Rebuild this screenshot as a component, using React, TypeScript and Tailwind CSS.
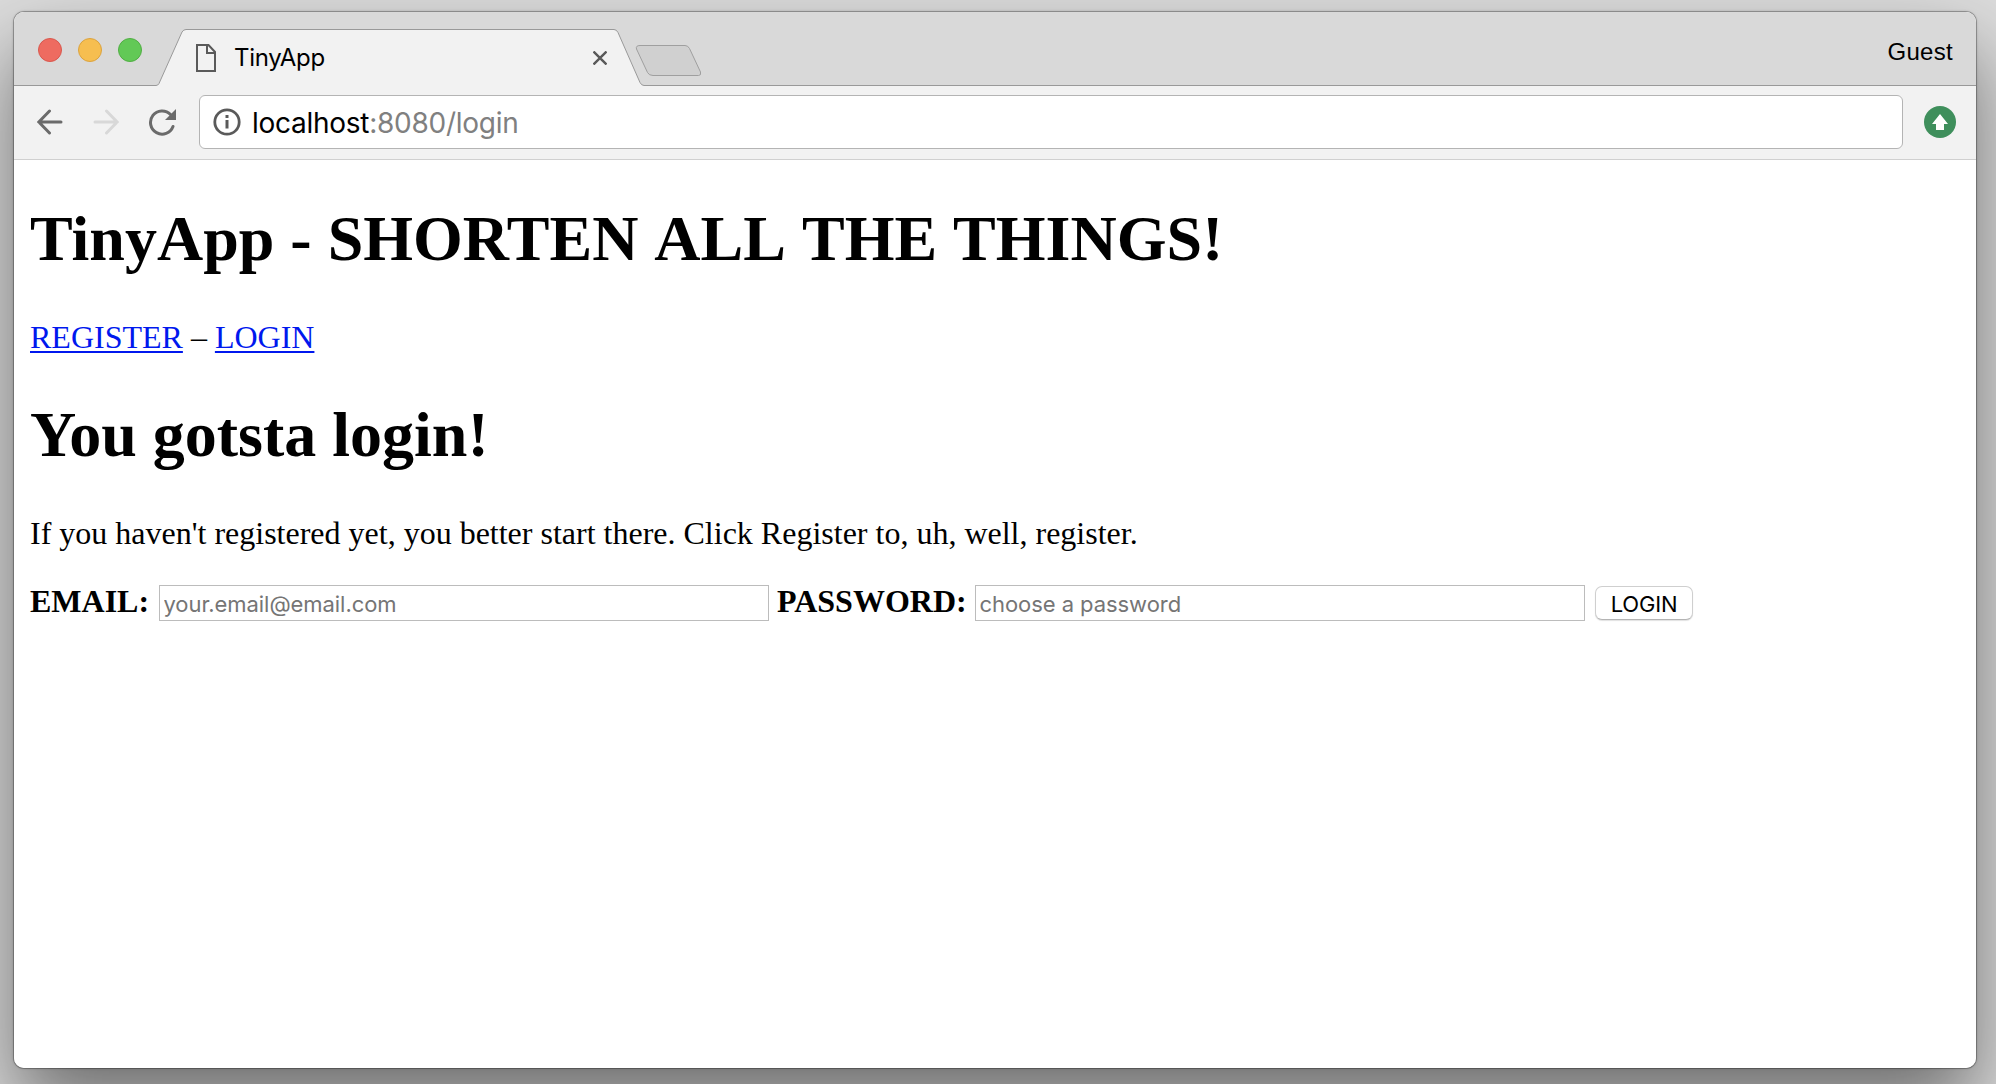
import React from "react";

function TabStrip() {
  return (
    <div className="relative flex h-[74px] shrink-0 items-start bg-[#d9d9d9]">
      <svg className="absolute left-0 top-0" width="1962" height="74" fill="none">
        <path d="M0 73.5H142Q144 73.5 145 71.5L168 20Q169.5 17.5 172 17.5H600Q602.500 17.500 604 20.500L626 70.500Q627.500 73.500 630 73.500H1962V75H0Z" fill="#f2f2f2" stroke="#999" />
        <path d="M626 33.500H671Q674 33.500 675.500 36.500L686.500 60Q687.500 63.500 684.500 63.500H639Q635 63.500 633.500 60.500L622.500 37Q621.500 33.500 626 33.500Z" fill="#d0d0d0" stroke="#9f9f9f" />
      </svg>
      <div className="relative ml-6 mt-[26px] flex gap-4">
        <span className="size-6 rounded-full border border-[#d9584e] bg-[#ee6b60]" />
        <span className="size-6 rounded-full border border-[#dba33f] bg-[#f6be50]" />
        <span className="size-6 rounded-full border border-[#51ae44] bg-[#62c956]" />
      </div>
      <svg className="relative ml-[54px] mt-8" width="20" height="28" fill="none" stroke="#5a5a5a" strokeWidth="2">
        <path d="M1 1H12.500L19 8V27H1Z" />
        <path d="M11 1V9H19" />
      </svg>
      <span className="relative ml-[18px] mt-[31px] w-[360px] text-[24px] leading-[30px] tracking-[-0.3px]">TinyApp</span>
      <svg className="relative -ml-px mt-[39px]" width="14" height="14" stroke="#5a5a5a" strokeWidth="2.400">
        <path d="M0.500 0.500L13.500 13.500M13.500 0.500L0.500 13.500" />
      </svg>
      <span className="relative ml-auto mr-[23px] mt-[25px] font-['Liberation_Sans',sans-serif] text-[24px] leading-[30px] tracking-[0.3px]">Guest</span>
    </div>
  );
}

function Toolbar() {
  return (
    <div className="flex h-[74px] shrink-0 items-center border-b border-[#d0d0d0] bg-[#f2f2f2] pb-px">
      <svg className="ml-[23px]" width="26" height="26" fill="none" stroke="#6b6b6b" strokeWidth="3" strokeLinecap="round">
        <path d="M2 13H24M12.500 2L1.800 13L12.500 24" />
      </svg>
      <svg className="ml-[30px]" width="26" height="26" fill="none" stroke="#d8d8d8" strokeWidth="3" strokeLinecap="round">
        <path d="M2 13H24M13.500 2L24.200 13L13.500 24" />
      </svg>
      <svg className="ml-[29px]" width="28" height="28" fill="none">
        <path d="M25 18.500A11.600 11.600 0 1 1 22.500 6.500" stroke="#6b6b6b" strokeWidth="3" strokeLinecap="round" />
        <path d="M28 1V12H17Z" fill="#6b6b6b" />
      </svg>
      <div className="ml-[23px] flex h-[54px] w-[1704px] items-center rounded-[6px] border border-[#b4b4b4] bg-white pl-[13px]">
        <svg width="28" height="28" fill="none">
          <circle cx="14" cy="14" r="12.200" stroke="#5a5a5a" strokeWidth="2.800" />
          <path d="M12.500 7H15.500V10H12.500ZM12.500 12H15.500V20.500H12.500Z" fill="#5a5a5a" />
        </svg>
        <span className="ml-[11px] mt-px whitespace-pre text-[28px] leading-8 tracking-[-0.27px]">
          localhost<span className="text-[#808080]">:8080/login</span>
        </span>
      </div>
      <svg className="ml-[21px]" width="32" height="32">
        <circle cx="16" cy="16" r="16" fill="#3f8f5c" />
        <path d="M16 8L24 18H20V24H12V18H8Z" fill="#fff" />
      </svg>
    </div>
  );
}

function Field({ placeholder, type }: { placeholder: string; type: string }) {
  return (
    <input
      type={type}
      placeholder={placeholder}
      className="h-9 w-[610px] border border-[#bcbcbc] bg-white pl-[3.500px] pt-0.5 font-[Inter,sans-serif] text-[22px] leading-7 tracking-[-0.06px] placeholder:text-[#757575]"
    />
  );
}

export default function App() {
  return (
    <div className="h-[1084px] w-[1996px] overflow-hidden bg-[#dcdcdc] pl-[14px] pt-3 font-[Inter,sans-serif] text-black">
      <div className="h-[1056px] w-[1962px] rounded-[10px] shadow-[0_0_0_1px_rgba(0,0,0,0.22),0_0_3px_rgba(0,0,0,0.35),0_40px_80px_rgba(0,0,0,0.5)]">
        <div className="flex h-full flex-col overflow-hidden rounded-[10px] bg-white">
          <TabStrip />
          <Toolbar />
          <main className="px-4 font-['Liberation_Serif',serif] text-[32px] leading-[37px]">
            <h1 className="mt-[42px] text-[64px] font-bold leading-[73px]">
              TinyApp - SHORTEN <span className="inline-block">ALL</span> <span className="inline-block">THE</span>{" "}
              <span className="inline-block">THINGS!</span>
            </h1>
            <p className="mt-11">
              <a href="#register" className="text-[#0018ee] underline decoration-2 underline-offset-[3px]">REGISTER</a> –{" "}
              <a href="#login" className="text-[#0018ee] underline decoration-2 underline-offset-[3px]">LOGIN</a>
            </p>
            <h1 className="mt-[42px] text-[64px] font-bold leading-[73px]">You gotsta login!</h1>
            <p className="mt-11">If you haven't registered yet, you better start there. Click Register to, uh, well, register.</p>
            <form className="mt-[31px] flex items-start">
              <label className="mr-2.5 w-[119px] whitespace-nowrap font-bold">EMAIL:</label>
              <div className="mt-0.5 flex"><Field type="text" placeholder="your.email@email.com" /></div>
              <label className="ml-2 w-[198px] whitespace-nowrap font-bold">PASSWORD:</label>
              <div className="mt-0.5 flex"><Field type="password" placeholder="choose a password" /></div>
              <button type="button" className="ml-2.5 mt-[3px] h-[34px] w-[98px] rounded-[7px] border border-[#cfcfcf] border-b-[#b4b4b4] bg-white pt-0.5 font-[Inter,sans-serif] text-[22px] leading-7 tracking-[-0.2px] shadow-[0_1px_1px_rgba(0,0,0,0.12)]">
                LOGIN
              </button>
            </form>
          </main>
        </div>
      </div>
    </div>
  );
}
